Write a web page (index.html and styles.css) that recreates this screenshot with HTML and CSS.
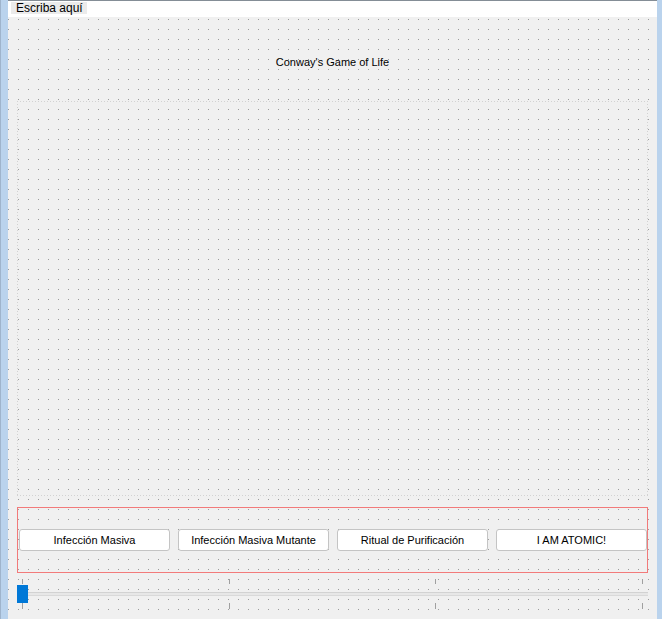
FILE: index.html
```html
<!DOCTYPE html>
<html lang="es">
<head>
<meta charset="utf-8">
<title>Conway's Game of Life</title>
<link rel="stylesheet" href="styles.css">
</head>
<body>
<div class="window">
  <div class="edge-left"></div>
  <div class="main">
    <div class="menubar"><span class="menu-item">Escriba aquí</span></div>
    <div class="form">
      <div class="title">Conway's Game of Life</div>
      <div class="canvas"></div>
      <div class="buttons">
        <button class="btn">Infección Masiva</button>
        <button class="btn">Infección Masiva Mutante</button>
        <button class="btn">Ritual de Purificación</button>
        <button class="btn">I AM ATOMIC!</button>
      </div>
      <div class="slider">
        <div class="ticks ticks-top"><i></i><i></i><i></i><i></i></div>
        <div class="track">
          <div class="groove"></div>
          <div class="handle"></div>
        </div>
        <div class="ticks ticks-bottom"><i></i><i></i><i></i><i></i></div>
      </div>
    </div>
  </div>
  <div class="edge-right"></div>
</div>
</body>
</html>
```

FILE: styles.css
```css
html, body {
  margin: 0;
  padding: 0;
}
body {
  width: 662px;
  height: 619px;
  overflow: hidden;
  font-family: "Liberation Sans", Arial, sans-serif;
  color: #000;
}
.window {
  display: flex;
  width: 662px;
  height: 619px;
}
.edge-left {
  width: 7px;
  border-left: 1px solid #9fb4cc;
  background: #bad3ed;
  flex: none;
}
.edge-right {
  width: 5px;
  background: #bad3ed;
  flex: none;
}
.main {
  flex: 1;
  display: flex;
  flex-direction: column;
  min-width: 0;
}
.menubar {
  height: 16px;
  border-top: 1px solid #848d96;
  background: #fff;
  display: flex;
  align-items: flex-start;
}
.menu-item {
  margin: 1px 0 0 3px;
  width: 71px;
  height: 12px;
  padding-left: 5px;
  background: #ebebeb;
  font-size: 12px;
  line-height: 12px;
}
.form {
  flex: 1;
  display: flex;
  flex-direction: column;
  padding: 0 9px;
  background-color: #f0f0f0;
  background-image:
    linear-gradient(90deg, transparent 0 1px, #f0f0f0 1px),
    linear-gradient(180deg, #9c9c9c 0 1px, transparent 1px);
  background-size: 10px 10px;
  background-position: 0 2px;
}
.title {
  height: 84px;
  box-sizing: border-box;
  padding-top: 37px;
  font-size: 11px;
  line-height: 16px;
  text-align: center;
}
.canvas {
  height: 395px;
  background:
    repeating-linear-gradient(90deg, #d2d2d2 0 1px, transparent 1px 3px) left top / 100% 1px no-repeat,
    repeating-linear-gradient(90deg, #d2d2d2 0 1px, transparent 1px 3px) left bottom / 100% 1px no-repeat,
    repeating-linear-gradient(180deg, #d2d2d2 0 1px, transparent 1px 3px) left top / 1px 100% no-repeat,
    repeating-linear-gradient(180deg, #d2d2d2 0 1px, transparent 1px 3px) right top / 1px 100% no-repeat;
}
.buttons {
  margin-top: 11px;
  height: 66px;
  box-sizing: border-box;
  border: 1px solid #f27a7a;
  padding: 21px 0 21px 1px;
  display: flex;
  gap: 8px;
}
.btn {
  flex: 1;
  height: 22px;
  margin: 0;
  padding: 0;
  border: 1px solid #c4c4c4;
  border-radius: 3px;
  background: #fff;
  font-family: "Liberation Sans", Arial, sans-serif;
  font-size: 11px;
  color: #000;
}
.slider {
  margin-top: 6px;
  display: flex;
  flex-direction: column;
}
.ticks {
  display: flex;
  justify-content: space-between;
  padding: 0 5px;
}
.ticks i {
  display: block;
  width: 1px;
  background: #a0a0a0;
}
.ticks-top {
  height: 5px;
  margin-bottom: 1px;
}
.ticks-bottom {
  height: 6px;
}
.track {
  position: relative;
  height: 18px;
}
.groove {
  margin-top: 7px;
  height: 4px;
  box-sizing: border-box;
  border-top: 1px solid #d2d2d2;
  border-bottom: 1px solid #d9d9d9;
  background: #e7e7e7;
}
.handle {
  position: absolute;
  left: 0;
  top: 0;
  width: 11px;
  height: 18px;
  background: #0078d7;
}
```
